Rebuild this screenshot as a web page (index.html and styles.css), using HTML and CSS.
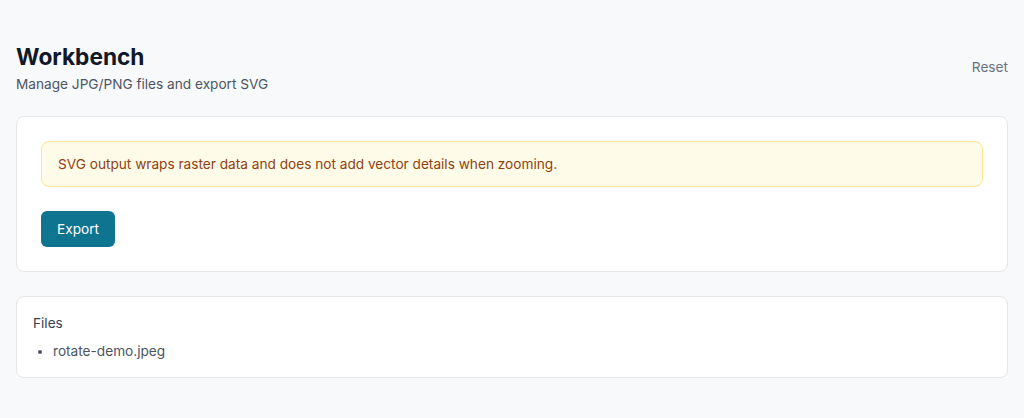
FILE: index.html
```html
<!DOCTYPE html>
<html lang="en">
<head>
<meta charset="utf-8">
<title>Workbench</title>
<link rel="stylesheet" href="styles.css">
</head>
<body>
<main class="page">
  <header class="header">
    <div class="titles">
      <h1 class="title">Workbench</h1>
      <p class="subtitle">Manage JPG/PNG files and export SVG</p>
    </div>
    <button class="reset" type="button">Reset</button>
  </header>
  <section class="card card-main">
    <div class="notice">SVG output wraps raster data and does not add vector details when zooming.</div>
    <div class="actions"><button class="btn-primary" type="button">Export</button></div>
  </section>
  <section class="card card-files">
    <h2 class="files-title">Files</h2>
    <ul class="file-list">
      <li>rotate-demo.jpeg</li>
    </ul>
  </section>
</main>
</body>
</html>
```

FILE: styles.css
```css
* { box-sizing: border-box; }
html, body { margin: 0; padding: 0; }
body {
  background: #f8f9fb;
  font-family: Inter, "Noto Sans", "Liberation Sans", sans-serif;
  font-size: 13.65px;
  line-height: 20px;
  color: #111827;
}
.page {
  padding: 43px 16px 16px;
  display: flex;
  flex-direction: column;
  gap: 24px;
}
.header {
  display: flex;
  align-items: center;
  justify-content: space-between;
  margin-bottom: -2px;
}
.title {
  margin: 0;
  font-size: 22.7px;
  line-height: 28px;
  font-weight: 700;
  color: #111827;
}
.subtitle {
  margin: 3px 0 0;
  font-size: 13.65px;
  line-height: 20px;
  color: #4b5563;
}
.reset {
  background: none;
  border: 0;
  padding: 0;
  font: inherit;
  color: #6b7280;
  margin-top: -4px;
  cursor: pointer;
}
.card {
  background: #fff;
  border: 1px solid #e5e7eb;
  border-radius: 8px;
}
.card-main {
  padding: 24px;
  display: flex;
  flex-direction: column;
  gap: 24px;
}
.notice {
  background: #fefbe8;
  border: 1px solid #fde68a;
  border-radius: 8px;
  padding: 12px 16px;
  color: #92400e;
}
.actions { display: flex; }
.btn-primary {
  background: #0f7490;
  color: #fff;
  border: 0;
  border-radius: 6px;
  padding: 8px 16px;
  font: inherit;
  line-height: 20px;
  cursor: pointer;
}
.card-files {
  padding: 16px;
  display: flex;
  flex-direction: column;
  gap: 8px;
}
.files-title {
  margin: 0;
  font-size: 13.65px;
  line-height: 20px;
  font-weight: 400;
  color: #374151;
}
.file-list {
  margin: 0;
  padding-left: 20px;
  color: #4b5563;
}
```
